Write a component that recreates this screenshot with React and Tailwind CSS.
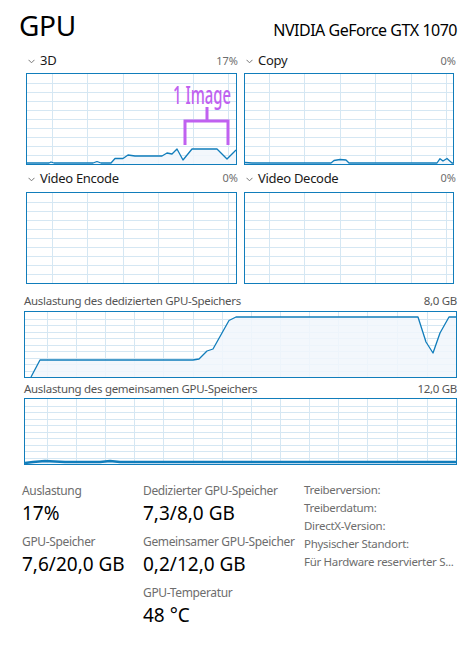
import React from "react";

const BLUE = "#117dbb";
const GRID = "#d5e7f3";
const FILL = "#f1f6fb";

function toPath(pts) {
  return pts.map((p, i) => `${i === 0 ? "M" : "L"}${p[0]},${p[1]}`).join(" ");
}

function Chart({ w, h, cols, rows, pts, stroke = 1.3, children }) {
  const iw = w - 2;
  const ih = h - 2;
  const step = ih / rows;
  const hLines = [];
  for (let i = 1; i < rows; i++) hLines.push(Math.round(i * step) + 0.5);
  const fillPath = pts
    ? `${toPath(pts)} L${pts[pts.length - 1][0]},${ih} L${pts[0][0]},${ih} Z`
    : null;
  return (
    <div className="border border-[#117dbb] bg-white" style={{ width: w, height: h }}>
      <svg width={iw} height={ih} className="block overflow-visible">
        {hLines.map((y) => (
          <line key={"h" + y} x1="0" x2={iw} y1={y} y2={y} stroke={GRID} strokeWidth="1" />
        ))}
        {cols.map((x) => (
          <line key={"v" + x} x1={x + 0.5} x2={x + 0.5} y1="0" y2={ih} stroke={GRID} strokeWidth="1" />
        ))}
        {pts && <path d={fillPath} fill={FILL} fillOpacity="0.85" />}
        {pts && (
          <path d={toPath(pts)} fill="none" stroke={BLUE} strokeWidth={stroke} strokeLinejoin="round" />
        )}
        {children}
      </svg>
    </div>
  );
}

function Chevron() {
  return (
    <svg width="7" height="5" className="mr-[5px] mt-[1px]">
      <polyline points="0.5,0.8 3.5,3.8 6.5,0.8" fill="none" stroke="#777" strokeWidth="1" />
    </svg>
  );
}

function SmallLabel({ title, value, h }) {
  return (
    <div className={`flex ${h} items-center pl-[2px] -mr-[2px] justify-between`}>
      <div className="flex items-center text-[13px] tracking-[-0.3px] text-[#1a1a1a]">
        <Chevron />
        <span>{title}</span>
      </div>
      <span className="text-[11px] text-[#6d6d6d]">{value}</span>
    </div>
  );
}

const leftCols = [25, 60, 96, 131, 166, 201];
const rightCols = [24, 59, 95, 130, 166, 201];
const wideCols = [22, 51, 80, 109, 138, 168, 197, 226, 255, 284, 313, 342, 372, 402];

const pts3d = [
  [0, 89], [22, 89], [24, 88], [27, 89], [66, 89], [70, 87.5], [74, 89], [84, 89],
  [88, 84.5], [96, 84.5], [101, 81], [108, 82], [135, 82], [140, 79], [145, 80],
  [150, 75], [156, 86], [165, 75], [190, 75], [200, 85], [209, 76],
];

const ptsCopy = [
  [0, 88.5], [7, 89], [86, 89], [89, 86.5], [95, 85.5], [101, 86], [104, 89],
  [192, 89], [195, 84.7], [198, 87], [202, 84.5], [207, 89], [209, 89],
];

const ptsDed = [
  [6, 65], [15, 48], [168, 48], [174, 47], [182, 39], [188, 37], [204, 8.5],
  [211, 5], [393, 5], [401, 30], [408, 41], [415, 21], [424, 5], [431, 5],
];

const ptsShared = [
  [0, 64], [8, 63], [20, 62], [40, 63], [75, 63], [85, 62], [95, 63],
  [135, 63], [431, 63],
];

function Stat({ label, value }) {
  return (
    <div className="mb-[7px]">
      <div className="whitespace-nowrap text-[12px] leading-[20px] tracking-[-0.35px] text-[#6d6d6d]">{label}</div>
      <div className="whitespace-nowrap text-[19px] leading-[24px] text-black">{value}</div>
    </div>
  );
}

export default function App() {
  return (
    <div className="w-[468px] h-[647px] overflow-hidden bg-white font-['Noto_Sans',sans-serif] text-black">
      <div className="flex h-[49px] justify-between">
        <span className="pl-[19px] pt-[11px] text-[28px] leading-[29px] tracking-[-0.3px]">GPU</span>
        <span className="pr-[11px] pt-[22px] text-[16px] leading-[17px] tracking-[-0.5px]">NVIDIA GeForce GTX 1070</span>
      </div>

      <div className="grid grid-cols-[210px_210px] gap-x-[8px] pl-[26px]">
        <div>
          <SmallLabel title="3D" value="17%" h="h-[24px]" />
          <Chart w={211} h={92} cols={leftCols} rows={10} pts={pts3d}>
            <text
              x="146"
              y="30"
              textLength="58"
              lengthAdjust="spacingAndGlyphs"
              fill="#c061f0"
              fontSize="24.5"
              fontWeight="500"
              fontFamily="Noto Sans, sans-serif"
            >
              1 Image
            </text>
            <path d="M158,71 L158,47 L201,47 L201,71 M180,33 L180,47" fill="none" stroke="#c061f0" strokeWidth="3" />
          </Chart>
        </div>
        <div>
          <SmallLabel title="Copy" value="0%" h="h-[24px]" />
          <Chart w={210} h={92} cols={rightCols} rows={10} pts={ptsCopy} />
        </div>
        <div>
          <SmallLabel title="Video Encode" value="0%" h="h-[27px]" />
          <Chart w={211} h={92} cols={leftCols} rows={10} />
        </div>
        <div>
          <SmallLabel title="Video Decode" value="0%" h="h-[27px]" />
          <Chart w={210} h={92} cols={rightCols} rows={10} />
        </div>
      </div>

      <div className="pl-[24px]">
        <div className="flex h-[27px] w-[433px] justify-between pt-[9px] text-[11.5px] leading-[16px] tracking-[-0.3px] text-[#555]">
          <span>Auslastung des dedizierten GPU-Speichers</span>
          <span>8,0 GB</span>
        </div>
        <Chart w={433} h={67} cols={wideCols} rows={10} pts={ptsDed} />
        <div className="flex h-[20px] w-[433px] justify-between pt-[3px] text-[11.5px] leading-[16px] tracking-[-0.3px] text-[#555]">
          <span>Auslastung des gemeinsamen GPU-Speichers</span>
          <span>12,0 GB</span>
        </div>
        <Chart w={433} h={67} cols={wideCols} rows={10} pts={ptsShared} stroke={2.5} />
      </div>

      <div className="flex pl-[22px] pt-[16px]">
        <div className="w-[121px]">
          <Stat label="Auslastung" value="17%" />
          <Stat label="GPU-Speicher" value="7,6/20,0 GB" />
        </div>
        <div className="w-[161px]">
          <Stat label="Dedizierter GPU-Speicher" value="7,3/8,0 GB" />
          <Stat label="Gemeinsamer GPU-Speicher" value="0,2/12,0 GB" />
          <Stat label="GPU-Temperatur" value="48 °C" />
        </div>
        <div className="whitespace-nowrap text-[11.5px] leading-[18px] tracking-[-0.3px] text-[#6d6d6d]">
          <div>Treiberversion:</div>
          <div>Treiberdatum:</div>
          <div>DirectX-Version:</div>
          <div>Physischer Standort:</div>
          <div>Für Hardware reservierter S...</div>
        </div>
      </div>
    </div>
  );
}
